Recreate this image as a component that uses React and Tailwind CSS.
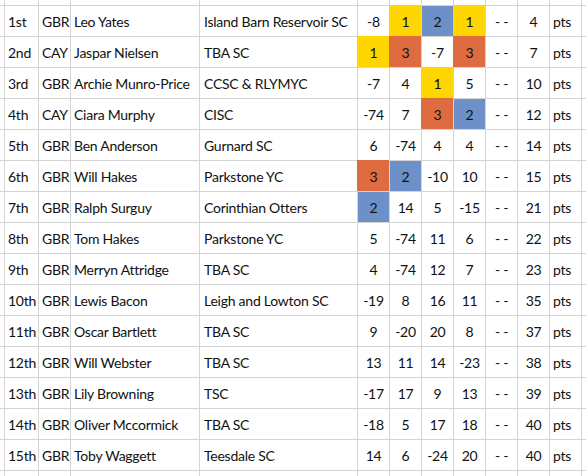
const rows = [
  ['1st', 'GBR', 'Leo Yates', 'Island Barn Reservoir SC', [['-8'], ['1', 'y'], ['2', 'b'], ['1', 'y']], '4'],
  ['2nd', 'CAY', 'Jaspar Nielsen', 'TBA SC', [['1', 'y'], ['3', 'o'], ['-7'], ['3', 'o']], '7'],
  ['3rd', 'GBR', 'Archie Munro-Price', 'CCSC & RLYMYC', [['-7'], ['4'], ['1', 'y'], ['5']], '10'],
  ['4th', 'CAY', 'Ciara Murphy', 'CISC', [['-74'], ['7'], ['3', 'o'], ['2', 'b']], '12'],
  ['5th', 'GBR', 'Ben Anderson', 'Gurnard SC', [['6'], ['-74'], ['4'], ['4']], '14'],
  ['6th', 'GBR', 'Will Hakes', 'Parkstone YC', [['3', 'o'], ['2', 'b'], ['-10'], ['10']], '15'],
  ['7th', 'GBR', 'Ralph Surguy', 'Corinthian Otters', [['2', 'b'], ['14'], ['5'], ['-15']], '21'],
  ['8th', 'GBR', 'Tom Hakes', 'Parkstone YC', [['5'], ['-74'], ['11'], ['6']], '22'],
  ['9th', 'GBR', 'Merryn Attridge', 'TBA SC', [['4'], ['-74'], ['12'], ['7']], '23'],
  ['10th', 'GBR', 'Lewis Bacon', 'Leigh and Lowton SC', [['-19'], ['8'], ['16'], ['11']], '35'],
  ['11th', 'GBR', 'Oscar Bartlett', 'TBA SC', [['9'], ['-20'], ['20'], ['8']], '37'],
  ['12th', 'GBR', 'Will Webster', 'TBA SC', [['13'], ['11'], ['14'], ['-23']], '38'],
  ['13th', 'GBR', 'Lily Browning', 'TSC', [['-17'], ['17'], ['9'], ['13']], '39'],
  ['14th', 'GBR', 'Oliver Mccormick', 'TBA SC', [['-18'], ['5'], ['17'], ['18']], '40'],
  ['15th', 'GBR', 'Toby Waggett', 'Teesdale SC', [['14'], ['6'], ['-24'], ['20']], '40'],
];

const fills = {
  y: 'bg-[#ffd600] border-[#ffd600]',
  b: 'bg-[#6d90c9] border-[#6d90c9]',
  o: 'bg-[#df6b41] border-[#df6b41]',
};

const Cell = ({ children, className = '', first = false, top = true }) => (
  <div
    className={`flex items-center overflow-hidden whitespace-nowrap border-[#d4d4d4] ${first ? '' : 'border-l'} ${top ? 'border-t' : ''} ${className}`}
  >
    {children}
  </div>
);

const App = () => {
  const cols = 13;
  return (
    <div
      className="w-[586px] h-[476px] overflow-hidden bg-white text-[#111] text-[14px] tracking-[-0.25px] leading-none"
      style={{ fontFamily: 'Lato, "Open Sans", sans-serif' }}
    >
      <div className="grid grid-cols-[4px_34px_32px_129px_158px_32px_32px_32px_32px_32px_32px_32px_40px] grid-rows-[5px_repeat(15,31px)_20px]">
        {Array.from({ length: cols }).map((_, i) => (
          <Cell key={`t${i}`} first={i === 0} top={false} />
        ))}

        {rows.map(([pos, nat, name, club, races, total]) => (
          <div key={pos} className="contents">
            <Cell first />
            <Cell className="pl-[3px] pt-[2px]">{pos}</Cell>
            <Cell className="pl-[3px] pt-[2px]">{nat}</Cell>
            <Cell className="pl-[3px] pt-[2px]">{name}</Cell>
            <Cell className="pl-[4px] pt-[2px]">{club}</Cell>
            {races.map(([v, c], i) => (
              <Cell key={i} className={`justify-center pt-[2px] ${c ? fills[c] : ''}`}>
                {v}
              </Cell>
            ))}
            <Cell className="justify-center pt-[2px]">- -</Cell>
            <Cell className="justify-center pt-[2px]">{total}</Cell>
            <Cell className="pl-[3px] pt-[2px]">pts</Cell>
            <Cell />
          </div>
        ))}

        {Array.from({ length: cols }).map((_, i) => (
          <Cell key={`b${i}`} first={i === 0} />
        ))}
      </div>
    </div>
  );
};

export default App;
